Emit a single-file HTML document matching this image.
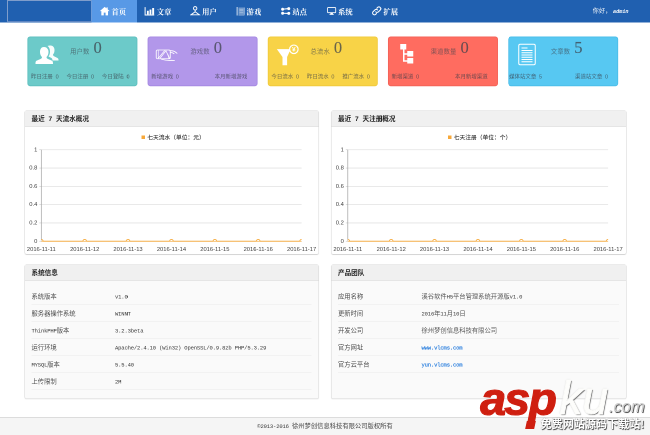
<!DOCTYPE html>
<html lang="zh-CN"><head><meta charset="utf-8"><title>管理后台</title>
<style>
html,body{margin:0;padding:0;background:#fff;overflow:hidden}
body{width:650px;height:435px;position:relative;font-family:"Liberation Serif","Noto Serif CJK SC",serif}
#p{position:absolute;left:0;top:0;width:1300px;height:870px;transform:scale(.5);transform-origin:0 0;will-change:transform;background:#fff;font-size:12.6px;color:#555}
#p div,#p span{box-sizing:border-box}
.hd{position:absolute;left:0;top:0;width:1300px;height:44.5px;background:#2060b0}
.logo{position:absolute;left:14px;top:0;width:170px;height:44px;border:2px solid #7f9dcb;border-bottom-color:#5f86c2}
.tab{position:absolute;top:0;width:90.4px;height:44.5px;color:#fff;font-weight:700;font-size:14.6px;line-height:44px;text-align:center;white-space:nowrap;padding-right:6px;font-family:"Liberation Serif","Noto Serif CJK SC",serif}
.tab svg{vertical-align:middle;margin-right:3.5px;position:relative;top:-1.5px}
.tab span{vertical-align:middle}
.tab.act{background:#5899e6}
.hello{position:absolute;right:43px;top:0;line-height:44px;color:#fff;font-size:12px;white-space:nowrap;font-family:"Liberation Sans","Noto Sans CJK SC",sans-serif;letter-spacing:.5px}
.hello i{font-family:"Liberation Mono",monospace;font-weight:700;font-size:10.3px;letter-spacing:0;margin-left:3px}
.card{position:absolute;top:73px;width:220px;height:99px;color:rgba(55,60,70,.72)}
.ci{position:absolute}
.cl{position:absolute;left:85.5px;top:4.5px;height:40px;white-space:nowrap}
.cn{font-size:12.6px;letter-spacing:.3px;position:relative;top:0.5px;font-family:"Liberation Sans","Noto Sans CJK SC",sans-serif;font-weight:400;color:rgba(60,65,75,.64)}
.cv{font-size:33px;margin-left:8px;font-family:"Liberation Serif",serif;color:rgba(60,65,75,.75);-webkit-text-stroke:.35px rgba(60,65,75,.4);position:relative;top:-1px}
.cb{position:absolute;top:70.5px;word-spacing:2.5px;font-size:10.9px;line-height:18px;text-align:center;white-space:nowrap;font-family:"Liberation Sans","Noto Sans CJK SC",sans-serif}
.panel{position:absolute;border:1.5px solid #d6d6d6;border-radius:4px;background:#fff;box-shadow:0 1px 2px rgba(0,0,0,.07)}
.ph{height:32px;line-height:31px;background:#f0f0f0;border-bottom:1.5px solid #d9d9d9;padding-left:13.5px;font-weight:700;font-size:13.2px;color:#222;white-space:nowrap;word-spacing:4px;font-family:"Liberation Sans","Noto Sans CJK SC",sans-serif}
.ch{position:absolute;left:0;top:32px}
.al{font-family:"Liberation Sans",sans-serif;font-size:11.6px;fill:#3c3c3c}
.lg{font-family:"Liberation Sans","Noto Sans CJK SC",sans-serif;font-size:11.5px;fill:#333;font-weight:500}
.tb{position:absolute;left:13.5px;right:13.5px;top:45.5px}
.tr{height:34px;border-bottom:1.5px solid #e9e9e9;line-height:36.5px;white-space:nowrap;position:relative}
.tk{position:absolute;left:0;font-size:12.6px;color:#4a4a4a;font-family:"Liberation Sans","Noto Sans CJK SC",sans-serif}
.tv{position:absolute;left:167px;font-size:12.6px;color:#555;font-family:"Liberation Sans","Noto Sans CJK SC",sans-serif}
i.m{font-style:normal;font-family:"Liberation Mono",monospace;font-size:11px;letter-spacing:-.3px;white-space:pre;color:#333}
.tv a,.tv a i.m{color:#1f78dc;text-decoration:none;-webkit-text-stroke:.3px #1f78dc}
.ft{position:absolute;left:0;top:834px;width:1300px;height:36px;background:#f5f5f5;border-top:2px solid #dcdcdc;text-align:center;line-height:33px;font-size:12.6px;color:#444;font-family:"Liberation Sans","Noto Sans CJK SC",sans-serif}

/* watermark (650 space) */
.wm{position:absolute;left:0;top:0;width:650px;height:435px;overflow:hidden;pointer-events:none}
.wm span{position:absolute;white-space:nowrap;font-family:"Liberation Sans",sans-serif;font-style:italic}
</style></head><body>
<div id="p">
<div class="hd"><div class="logo"></div>
<div class="tab act" style="left:183.2px"><svg width="20.7" height="18.3" viewBox="0 0 17 15"><path d="M8.5 0.5L0.5 7.5H3V14.5H7V10H10V14.5H14V7.5H16.5L13.5 4.8V1.5H11.5V3.1z" fill="#fff"/></svg><span>首页</span></div><div class="tab" style="left:273.9px"><svg width="20.7" height="18.3" viewBox="0 0 17 15"><path d="M1 1V14H16" fill="none" stroke="#fff" stroke-width="1.6"/><g fill="#fff"><rect x="4" y="7" width="3" height="6"/><rect x="8.3" y="5" width="3" height="8"/><rect x="12.6" y="2.5" width="3.2" height="10.5"/></g></svg><span>文章</span></div><div class="tab" style="left:364.5px"><svg width="20.7" height="19.5" viewBox="0 0 17 16"><g fill="none" stroke="#fff" stroke-width="1.5"><circle cx="8.5" cy="3.8" r="2.8"/><path d="M8.5 6.6V10M8.5 9.5L1.5 14.5H15.5z"/></g></svg><span>用户</span></div><div class="tab" style="left:455.2px"><svg width="17" height="19" viewBox="0 0 17 19"><path d="M1.2 1V18" stroke="#fff" stroke-width="1.6"/><rect x="4" y="2" width="11.5" height="14.5" fill="#fff" fill-opacity=".38"/><path d="M15.8 2V16.5M4 17.3H16" stroke="#fff" stroke-opacity=".7" stroke-width="1.1" fill="none"/><path d="M6 5.5H13.5M6 8.5H13.5M6 11.5H13.5" stroke="#fff" stroke-opacity=".45" stroke-width="1"/></svg><span>游戏</span></div><div class="tab" style="left:545.8px"><svg width="19" height="17" viewBox="0 0 19 17"><g fill="#fff"><circle cx="3.2" cy="4.5" r="2.9"/><circle cx="3.2" cy="12.5" r="2.9"/><circle cx="15.5" cy="3.2" r="3"/><circle cx="15.5" cy="12.8" r="3"/></g><path d="M3 4.5L15.5 3.200M3 12.5L15.5 12.8" stroke="#fff" stroke-width="2.2"/></svg><span>站点</span></div><div class="tab" style="left:636.5px"><svg width="18.5" height="16.3" viewBox="0 0 17 15" style="margin-left:2px"><rect x="1" y="1" width="15" height="9.5" rx="1" fill="none" stroke="#fff" stroke-width="1.5"/><path d="M6.5 11h4l.8 2.5h-5.6z" fill="#fff"/><rect x="4.5" y="13.2" width="8" height="1.3" fill="#fff"/></svg><span>系统</span></div><div class="tab" style="left:727.1px"><svg width="20.7" height="19.5" viewBox="0 0 17 16"><g fill="none" stroke="#fff" stroke-width="1.7" stroke-linecap="round"><path d="M7 9.5a3 3 0 0 0 4.3.2l3-3a3 3 0 0 0-4.3-4.3L8.8 3.6"/><path d="M10 6.5a3 3 0 0 0-4.3-.2l-3 3a3 3 0 0 0 4.3 4.3l1.2-1.2"/></g></svg><span>扩展</span></div>
<div class="hello">你好，<i>admin</i></div>
</div>
<svg style="position:absolute;left:0;top:0" width="1300" height="200" viewBox="0 0 1300 200"><rect x="55.70" y="73.9" width="218.2" height="97.6" rx="4.5" fill="#6ccac9" stroke="#5fbfbe" stroke-width="1.8"/><rect x="296.08" y="73.9" width="218.2" height="97.6" rx="4.5" fill="#b297ea" stroke="#a689e2" stroke-width="1.8"/><rect x="536.46" y="73.9" width="218.2" height="97.6" rx="4.5" fill="#f8d347" stroke="#f0ca3c" stroke-width="1.8"/><rect x="776.84" y="73.9" width="218.2" height="97.6" rx="4.5" fill="#ff6c60" stroke="#f36257" stroke-width="1.8"/><rect x="1017.22" y="73.9" width="218.2" height="97.6" rx="4.5" fill="#57c8f2" stroke="#4bbde8" stroke-width="1.8"/></svg>
<div class="card" style="left:54.8px">
<svg class="ci" style="left:16px;top:16px" width="46" height="40" viewBox="0 0 46 40"><g fill="#fff"><path d="M30 2c5 0 8 4 8 9 0 4-1 7-3 9 0 2 1 3 3 4l6 3c2 1 2 3 2 5H34c0-3-1-5-4-6l-4-2c2-3 3-6 3-10 0-5-2-9-5-11 2-1 4-1 6-1z" opacity=".95"/><path d="M17 5c6 0 9 5 9 10 0 4-1.5 8-4 10 0 2 1 3 3 4l7 3c3 1 3 4 3 7H0c0-3 0-6 3-7l7-3c2-1 3-2 3-4-2.5-2-4-6-4-10C9 10 11 5 17 5z"/></g></svg>
<div class="cl"><span class="cn">用户数</span><span class="cv">0</span></div>
<div class="cb" style="left:-0.6px;width:70.9px">昨日注册 0</div>
<div class="cb" style="left:70.3px;width:70.9px">今日注册 0</div>
<div class="cb" style="left:141.2px;width:70.9px">今日登陆 0</div>
</div>
<div class="card" style="left:295.2px">
<svg class="ci" style="left:16px;top:24px" width="46" height="26" viewBox="0 0 46 26"><g fill="none" stroke="#fff" stroke-width="1.7" stroke-linejoin="round" stroke-linecap="round"><rect x="1.5" y="3" width="28" height="17.5" rx="2.5"/><path d="M5.5 4v15.5" stroke-width="1.2"/><path d="M6.5 18.5L18 4.5M9.5 19L21 4.5" stroke-width="1.4"/><path d="M21 5l7 14" stroke-width="1.5"/><path d="M29 4.5c4-.5 7 .3 9.5 1.800l4.5 3.200M30 8c3 0 5 .8 7 2.300M24.5 12c1.5 2.5 2.5 5 2.5 8M12 21.5c6 1.800 13 2.800 20 2.200l6 .3"/></g></svg>
<div class="cl"><span class="cn">游戏数</span><span class="cv">0</span></div>
<div class="cb" style="left:-0.6px;width:70.9px">新增游戏 0</div>
<div class="cb" style="left:112px;width:109.6px">本月新增游戏</div>
</div>
<div class="card" style="left:535.6px">
<svg class="ci" style="left:14px;top:14px" width="50" height="44" viewBox="0 0 50 44"><path d="M3.7 11.2H31.5L24.2 27V43.6H15V27z" fill="#fff"/><circle cx="37.7" cy="11.6" r="8.5" fill="#f8d347" stroke="#fff" stroke-width="2.4"/><text x="37.7" y="16.3" text-anchor="middle" font-family="Liberation Sans, sans-serif" font-size="13" font-weight="700" fill="#fff">¥</text></svg>
<div class="cl"><span class="cn">总流水</span><span class="cv">0</span></div>
<div class="cb" style="left:-0.6px;width:70.9px">今日流水 0</div>
<div class="cb" style="left:70.3px;width:70.9px">昨日流水 0</div>
<div class="cb" style="left:141.2px;width:70.9px">推广流水 0</div>
</div>
<div class="card" style="left:775.9px">
<svg class="ci" style="left:22px;top:14px" width="30" height="42" viewBox="0 0 30 42"><g fill="#fff"><rect x="2.5" y="1" width="12" height="11"/><rect x="16.5" y="15" width="12" height="11"/><rect x="16.5" y="29" width="12" height="11"/></g><path d="M9.5 12v23h8M9.5 21h8" fill="none" stroke="#fff" stroke-width="3"/></svg>
<div class="cl"><span class="cn">渠道数量</span><span class="cv">0</span></div>
<div class="cb" style="left:-0.6px;width:70.9px">新增渠道 0</div>
<div class="cb" style="left:112px;width:109.6px">本月新增渠道</div>
</div>
<div class="card" style="left:1016.3px">
<svg class="ci" style="left:20px;top:14px" width="36" height="44" viewBox="0 0 36 44"><rect x="1.5" y="1.5" width="33" height="41" rx="3" fill="none" stroke="#fff" stroke-width="2"/><g stroke="#fff" stroke-width="1.8"><path d="M7 9h12M7 14h22M7 18.5h22M7 23h22M7 27.5h22M7 32h22M7 36.5h22"/></g></svg>
<div class="cl"><span class="cn">文章数</span><span class="cv">5</span></div>
<div class="cb" style="left:-0.6px;width:70.9px">媒体站文章 5</div>
<div class="cb" style="left:112px;width:109.6px">渠道站文章 0</div>
</div>
<div class="panel" style="left:48.5px;top:220.5px;width:589px;height:288px">
<div class="ph">最近 7 天流水概况</div>
<svg class="ch" width="589" height="253" viewBox="0 32.5 589 253"><clipPath id="cp48"><rect x="32.6" y="0" width="520.6" height="261.0"/></clipPath>
<line x1="32.6" x2="553.2" y1="261.0" y2="261.0" stroke="#e2e2e2" stroke-width="1.6"/>
<text x="24.6" y="264.0" text-anchor="end" class="al">0</text>
<line x1="28.6" x2="32.6" y1="261.0" y2="261.0" stroke="#c8c8c8" stroke-width="1.2"/>
<line x1="32.6" x2="553.2" y1="224.4" y2="224.4" stroke="#e2e2e2" stroke-width="1.6"/>
<text x="24.6" y="227.4" text-anchor="end" class="al">0.2</text>
<line x1="28.6" x2="32.6" y1="224.4" y2="224.4" stroke="#c8c8c8" stroke-width="1.2"/>
<line x1="32.6" x2="553.2" y1="187.8" y2="187.8" stroke="#e2e2e2" stroke-width="1.6"/>
<text x="24.6" y="190.8" text-anchor="end" class="al">0.4</text>
<line x1="28.6" x2="32.6" y1="187.8" y2="187.8" stroke="#c8c8c8" stroke-width="1.2"/>
<line x1="32.6" x2="553.2" y1="151.2" y2="151.2" stroke="#e2e2e2" stroke-width="1.6"/>
<text x="24.6" y="154.2" text-anchor="end" class="al">0.6</text>
<line x1="28.6" x2="32.6" y1="151.2" y2="151.2" stroke="#c8c8c8" stroke-width="1.2"/>
<line x1="32.6" x2="553.2" y1="114.6" y2="114.6" stroke="#e2e2e2" stroke-width="1.6"/>
<text x="24.6" y="117.6" text-anchor="end" class="al">0.8</text>
<line x1="28.6" x2="32.6" y1="114.6" y2="114.6" stroke="#c8c8c8" stroke-width="1.2"/>
<line x1="32.6" x2="553.2" y1="78.0" y2="78.0" stroke="#e2e2e2" stroke-width="1.6"/>
<text x="24.6" y="81.0" text-anchor="end" class="al">1</text>
<line x1="28.6" x2="32.6" y1="78.0" y2="78.0" stroke="#c8c8c8" stroke-width="1.2"/>
<line x1="32.6" x2="32.6" y1="78.0" y2="261.0" stroke="#a0a0a0" stroke-width="1.4"/>
<line x1="32.6" x2="553.2" y1="261.0" y2="261.0" stroke="#f6b04a" stroke-width="2"/>
<path d="M29.0 261.0 A3.6 3.6 0 0 1 36.2 261.0" fill="#fff" stroke="#f6b04a" stroke-width="2" clip-path="url(#cp48)"/>
<text x="32.6" y="280.0" text-anchor="middle" class="al">2016-11-11</text>
<path d="M115.8 261.0 A3.6 3.6 0 0 1 123.0 261.0" fill="#fff" stroke="#f6b04a" stroke-width="2" clip-path="url(#cp48)"/>
<text x="119.4" y="280.0" text-anchor="middle" class="al">2016-11-12</text>
<path d="M202.5 261.0 A3.6 3.6 0 0 1 209.7 261.0" fill="#fff" stroke="#f6b04a" stroke-width="2" clip-path="url(#cp48)"/>
<text x="206.1" y="280.0" text-anchor="middle" class="al">2016-11-13</text>
<path d="M289.3 261.0 A3.6 3.6 0 0 1 296.5 261.0" fill="#fff" stroke="#f6b04a" stroke-width="2" clip-path="url(#cp48)"/>
<text x="292.9" y="280.0" text-anchor="middle" class="al">2016-11-14</text>
<path d="M376.1 261.0 A3.6 3.6 0 0 1 383.3 261.0" fill="#fff" stroke="#f6b04a" stroke-width="2" clip-path="url(#cp48)"/>
<text x="379.7" y="280.0" text-anchor="middle" class="al">2016-11-15</text>
<path d="M462.8 261.0 A3.6 3.6 0 0 1 470.0 261.0" fill="#fff" stroke="#f6b04a" stroke-width="2" clip-path="url(#cp48)"/>
<text x="466.4" y="280.0" text-anchor="middle" class="al">2016-11-16</text>
<path d="M549.6 261.0 A3.6 3.6 0 0 1 556.8 261.0" fill="#fff" stroke="#f6b04a" stroke-width="2" clip-path="url(#cp48)"/>
<text x="553.2" y="280.0" text-anchor="middle" class="al">2016-11-17</text>
<rect x="233.0" y="49.5" width="7" height="7" fill="#f7a83a"/>
<text x="244.5" y="57.5" class="lg">七天流水（单位：元）</text>
</svg></div>
<div class="panel" style="left:661.5px;top:220.5px;width:591px;height:288px">
<div class="ph">最近 7 天注册概况</div>
<svg class="ch" width="589" height="253" viewBox="0 32.5 589 253"><clipPath id="cp661"><rect x="32.6" y="0" width="520.6" height="261.0"/></clipPath>
<line x1="32.6" x2="553.2" y1="261.0" y2="261.0" stroke="#e2e2e2" stroke-width="1.6"/>
<text x="24.6" y="264.0" text-anchor="end" class="al">0</text>
<line x1="28.6" x2="32.6" y1="261.0" y2="261.0" stroke="#c8c8c8" stroke-width="1.2"/>
<line x1="32.6" x2="553.2" y1="224.4" y2="224.4" stroke="#e2e2e2" stroke-width="1.6"/>
<text x="24.6" y="227.4" text-anchor="end" class="al">0.2</text>
<line x1="28.6" x2="32.6" y1="224.4" y2="224.4" stroke="#c8c8c8" stroke-width="1.2"/>
<line x1="32.6" x2="553.2" y1="187.8" y2="187.8" stroke="#e2e2e2" stroke-width="1.6"/>
<text x="24.6" y="190.8" text-anchor="end" class="al">0.4</text>
<line x1="28.6" x2="32.6" y1="187.8" y2="187.8" stroke="#c8c8c8" stroke-width="1.2"/>
<line x1="32.6" x2="553.2" y1="151.2" y2="151.2" stroke="#e2e2e2" stroke-width="1.6"/>
<text x="24.6" y="154.2" text-anchor="end" class="al">0.6</text>
<line x1="28.6" x2="32.6" y1="151.2" y2="151.2" stroke="#c8c8c8" stroke-width="1.2"/>
<line x1="32.6" x2="553.2" y1="114.6" y2="114.6" stroke="#e2e2e2" stroke-width="1.6"/>
<text x="24.6" y="117.6" text-anchor="end" class="al">0.8</text>
<line x1="28.6" x2="32.6" y1="114.6" y2="114.6" stroke="#c8c8c8" stroke-width="1.2"/>
<line x1="32.6" x2="553.2" y1="78.0" y2="78.0" stroke="#e2e2e2" stroke-width="1.6"/>
<text x="24.6" y="81.0" text-anchor="end" class="al">1</text>
<line x1="28.6" x2="32.6" y1="78.0" y2="78.0" stroke="#c8c8c8" stroke-width="1.2"/>
<line x1="32.6" x2="32.6" y1="78.0" y2="261.0" stroke="#a0a0a0" stroke-width="1.4"/>
<line x1="32.6" x2="553.2" y1="261.0" y2="261.0" stroke="#f6b04a" stroke-width="2"/>
<path d="M29.0 261.0 A3.6 3.6 0 0 1 36.2 261.0" fill="#fff" stroke="#f6b04a" stroke-width="2" clip-path="url(#cp661)"/>
<text x="32.6" y="280.0" text-anchor="middle" class="al">2016-11-11</text>
<path d="M115.8 261.0 A3.6 3.6 0 0 1 123.0 261.0" fill="#fff" stroke="#f6b04a" stroke-width="2" clip-path="url(#cp661)"/>
<text x="119.4" y="280.0" text-anchor="middle" class="al">2016-11-12</text>
<path d="M202.5 261.0 A3.6 3.6 0 0 1 209.7 261.0" fill="#fff" stroke="#f6b04a" stroke-width="2" clip-path="url(#cp661)"/>
<text x="206.1" y="280.0" text-anchor="middle" class="al">2016-11-13</text>
<path d="M289.3 261.0 A3.6 3.6 0 0 1 296.5 261.0" fill="#fff" stroke="#f6b04a" stroke-width="2" clip-path="url(#cp661)"/>
<text x="292.9" y="280.0" text-anchor="middle" class="al">2016-11-14</text>
<path d="M376.1 261.0 A3.6 3.6 0 0 1 383.3 261.0" fill="#fff" stroke="#f6b04a" stroke-width="2" clip-path="url(#cp661)"/>
<text x="379.7" y="280.0" text-anchor="middle" class="al">2016-11-15</text>
<path d="M462.8 261.0 A3.6 3.6 0 0 1 470.0 261.0" fill="#fff" stroke="#f6b04a" stroke-width="2" clip-path="url(#cp661)"/>
<text x="466.4" y="280.0" text-anchor="middle" class="al">2016-11-16</text>
<path d="M549.6 261.0 A3.6 3.6 0 0 1 556.8 261.0" fill="#fff" stroke="#f6b04a" stroke-width="2" clip-path="url(#cp661)"/>
<text x="553.2" y="280.0" text-anchor="middle" class="al">2016-11-17</text>
<rect x="233.0" y="49.5" width="7" height="7" fill="#f7a83a"/>
<text x="244.5" y="57.5" class="lg">七天注册（单位：个）</text>
</svg></div>
<div class="panel" style="left:48.5px;top:528.5px;width:589px;height:269px;background:#fafafa">
<div class="ph">系统信息</div><div class="tb">
<div class="tr"><span class="tk">系统版本</span><span class="tv"><i class="m">v1.0</i></span></div>
<div class="tr"><span class="tk">服务器操作系统</span><span class="tv"><i class="m">WINNT</i></span></div>
<div class="tr"><span class="tk"><i class="m">ThinkPHP</i>版本</span><span class="tv"><i class="m">3.2.3beta</i></span></div>
<div class="tr"><span class="tk">运行环境</span><span class="tv"><i class="m">Apache/2.4.10 (Win32) OpenSSL/0.9.8zb PHP/5.3.29</i></span></div>
<div class="tr"><span class="tk"><i class="m">MYSQL</i>版本</span><span class="tv"><i class="m">5.5.40</i></span></div>
<div class="tr"><span class="tk">上传限制</span><span class="tv"><i class="m">2M</i></span></div>
</div></div>
<div class="panel" style="left:661.5px;top:528.5px;width:591px;height:269px;background:#fafafa">
<div class="ph">产品团队</div><div class="tb">
<div class="tr"><span class="tk">应用名称</span><span class="tv">溪谷软件<i class="m">H5</i>平台管理系统开源版<i class="m">v1.0</i></span></div>
<div class="tr"><span class="tk">更新时间</span><span class="tv"><i class="m">2016</i>年<i class="m">11</i>月<i class="m">10</i>日</span></div>
<div class="tr"><span class="tk">开发公司</span><span class="tv">徐州梦创信息科技有限公司</span></div>
<div class="tr"><span class="tk">官方网址</span><span class="tv"><a><i class="m">www.vlcms.com</i></a></span></div>
<div class="tr"><span class="tk">官方云平台</span><span class="tv"><a><i class="m">yun.vlcms.com</i></a></span></div>
</div></div>
<div class="ft"><i class="m">©2013-2016 </i>徐州梦创信息科技有限公司版权所有</div>
</div>
<div class="wm">
<span style="left:480.3px;top:374.5px;line-height:48px;font-size:46.5px;font-weight:700;color:#cf1f10;-webkit-text-stroke:1.2px #cf1f10;letter-spacing:-1.8px">asp</span>
<b style="position:absolute;left:526.2px;top:421px;width:8.6px;height:8px;background:#cf1f10;transform:skewX(-12deg)"></b>
<span style="left:559.5px;top:375px;line-height:46px;font-size:46px;color:#fdfdfb;-webkit-text-stroke:.9px #fdfdfb;text-shadow:1px 1px 1px #666,0 0 1.5px #aaa">ku</span>
<span style="left:609px;top:398px;line-height:17px;font-size:16.5px;color:#cfcfcf;text-shadow:.7px .7px .7px #444">.com</span>
<span style="left:540.5px;top:416.5px;line-height:14px;font-size:11.1px;font-style:normal;font-weight:700;color:#fff;font-family:'Liberation Sans','Noto Sans CJK SC',sans-serif;text-shadow:.8px .8px .8px #444,0 0 1px #777">免费网站源码下载站!</span>
</div>
</body></html>
